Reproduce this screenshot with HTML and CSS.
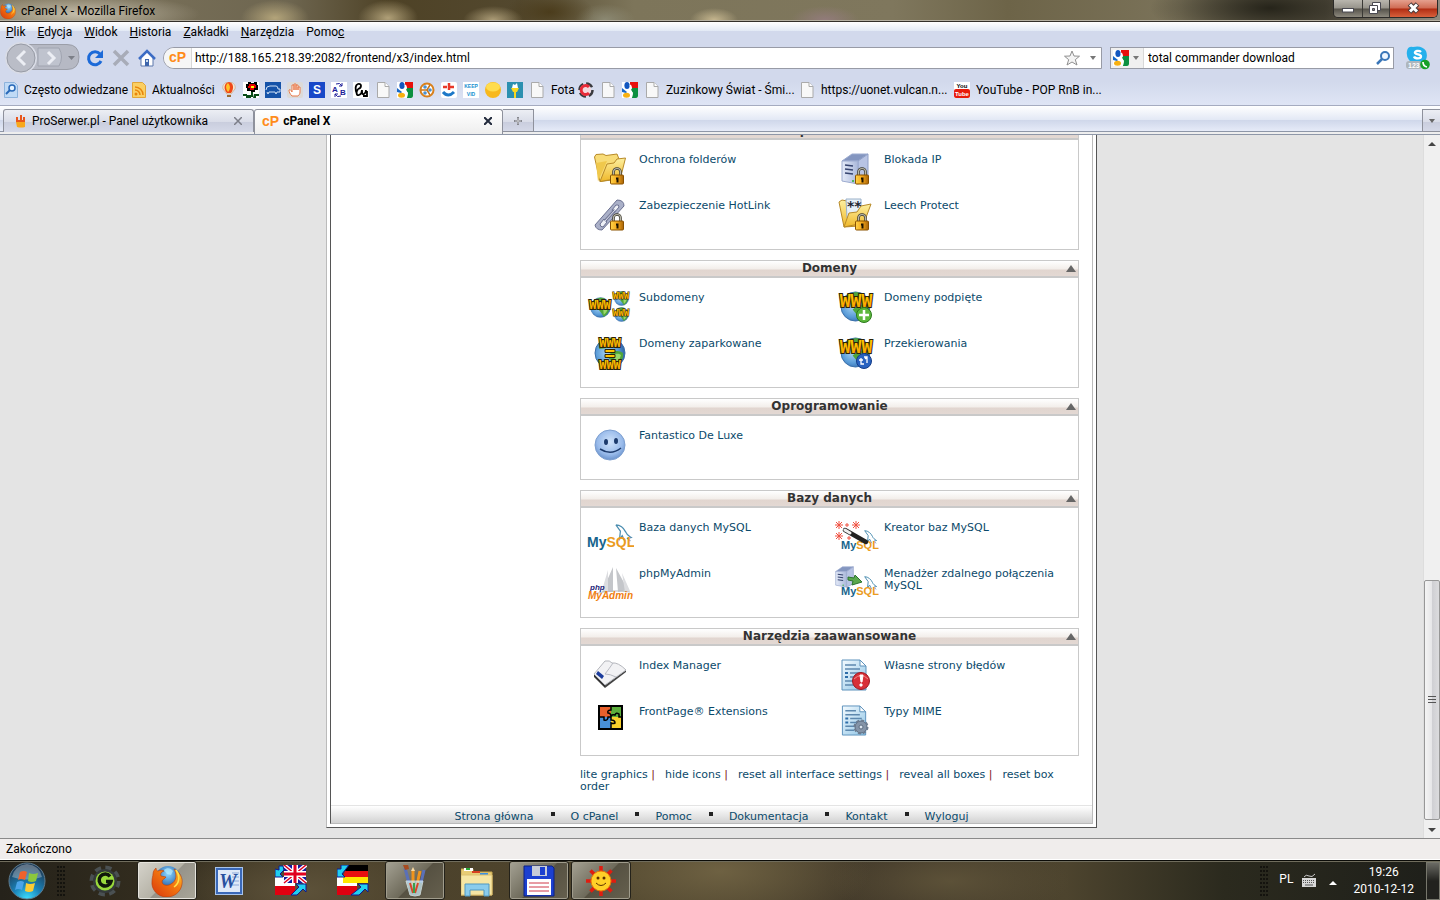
FILE: index.html
```html
<!DOCTYPE html>
<html lang="pl">
  <head>
    <meta charset="UTF-8" />
    <meta name="viewport" content="width=device-width, initial-scale=1.0" />
    <title>cPanel X - Mozilla Firefox</title>
    <link rel="stylesheet" href="styles.css">
  </head>
  <body>
    <!-- shared icon parts -->
    <svg class="sprite" aria-hidden="true">
      <defs>
        <linearGradient id="gold" x1="0" y1="0" x2="0" y2="1">
          <stop offset="0" stop-color="#fdf0a0" /><stop offset="1" stop-color="#f0b82a" />
        </linearGradient>
        <linearGradient id="lockgold" x1="0" y1="0" x2="1" y2="0">
          <stop offset="0" stop-color="#ffd34a" /><stop offset="0.5" stop-color="#f5a91c" /><stop offset="1" stop-color="#a86408" />
        </linearGradient>
        <linearGradient id="steel" x1="0" y1="0" x2="1" y2="0">
          <stop offset="0" stop-color="#e4eaf8" /><stop offset="1" stop-color="#aab8da" />
        </linearGradient>
        <linearGradient id="paper" x1="0" y1="0" x2="1" y2="1">
          <stop offset="0" stop-color="#f4fbff" /><stop offset="1" stop-color="#8ec4e6" />
        </linearGradient>
        <linearGradient id="letters" x1="0" y1="0" x2="0" y2="1">
          <stop offset="0" stop-color="#ffd400" /><stop offset="1" stop-color="#f79a00" />
        </linearGradient>
        <radialGradient id="water" cx="0.4" cy="0.5" r="0.6">
          <stop offset="0" stop-color="#a8d4f4" /><stop offset="0.6" stop-color="#5a9cd8" /><stop offset="1" stop-color="#2c64a8" />
        </radialGradient>
        <radialGradient id="smile" cx="0.5" cy="0.4" r="0.6">
          <stop offset="0" stop-color="#cfe2fa" /><stop offset="0.7" stop-color="#98baea" /><stop offset="1" stop-color="#6a92cc" />
        </radialGradient>
        <radialGradient id="orb" cx="0.5" cy="1" r="0.9">
          <stop offset="0" stop-color="#3ee0ff" /><stop offset="0.45" stop-color="#1a82b8" /><stop offset="1" stop-color="#1d3a56" />
        </radialGradient>
        <radialGradient id="foxblue" cx="0.5" cy="0.3" r="0.6">
          <stop offset="0" stop-color="#8fd8ff" /><stop offset="1" stop-color="#1450a0" />
        </radialGradient>
        <linearGradient id="foxfur" x1="0" y1="1" x2="1" y2="0">
          <stop offset="0" stop-color="#d8360c" /><stop offset="0.6" stop-color="#f47a10" /><stop offset="1" stop-color="#ffd83a" />
        </linearGradient>
      </defs>
      <symbol id="lock" viewBox="0 0 14 18">
        <path d="M3.500 9V5a3.500 3.500 0 0 1 7 0v4" fill="none" stroke="#3c3a30" stroke-width="2.600" />
        <path d="M3.500 9V5a3.500 3.500 0 0 1 7 0v4" fill="none" stroke="#b9b7a8" stroke-width="1.200" />
        <rect x="0.500" y="8" width="13" height="9" rx="1" fill="url(#lockgold)" stroke="#8a5200" />
        <path d="M6 10.500h2.500v5h-2v-3H6z" fill="#1c1200" />
      </symbol>
      <symbol id="server" viewBox="0 0 28 32">
        <path d="M1 8 11 1h16L17 8z" fill="#8496c0" stroke="#9cabcf" />
        <path d="M17 8 27 1v25l-10 5z" fill="#b8c4e4" stroke="#8e9ec6" />
        <path d="M1 8h16v23L1 28z" fill="url(#steel)" stroke="#9cabcf" />
        <path d="M4 12l8 1M4 16l8 1M4 20l8 1" stroke="#35436e" stroke-width="1.500" />
        <circle cx="12" cy="28" r="1" fill="#28b030" />
      </symbol>
      <symbol id="folder" viewBox="0 0 32 30">
        <path d="M0.500 4 2 1.500l7-.5 3 1.500L23 1l2 5v20L6 28.500z" fill="#f8dc78" stroke="#b88a28" />
        <path d="M4 28.500 2 10l11-2z" fill="#f0c84c" />
        <path d="M6 28.500 13 11l7-1 3-4 8.500-1-5 20z" fill="url(#gold)" stroke="#b88a28" />
      </symbol>
      <symbol id="globe" viewBox="0 0 32 32">
        <circle cx="16" cy="16" r="15" fill="url(#water)" stroke="#3a6ea8" />
        <path d="M6 6c5-5 12-6 17-3l-3 5-7 3-8 1zM17 16c5-3 9-2 12 0 1 6-3 11-8 14l-4-6-4-5z" fill="#4fa53a" />
        <path d="M20 18c3-2 5-1 7 0-1 4-3 7-6 9z" fill="#9ad86a" />
      </symbol>
      <symbol id="dolphin" viewBox="0 0 20 20">
        <path d="M1 1c5 0 9 4 11 8 1 3 3 4 6 6l-4 1 3 3M1 1l5 7-1 9 3-4 3 6" fill="none" stroke="#4b8db0" stroke-width="1.400" />
      </symbol>
      <symbol id="sheet" viewBox="0 0 28 32">
        <path d="M1 1h18l6 6v24H1z" fill="url(#paper)" stroke="#5c92bc" />
        <path d="M19 1v6h6z" fill="#fff" stroke="#5c92bc" />
        <path d="M4 6h11M4 10h15M9 14h12M9 18h12M4 22h11M4 26h9" stroke="#5d88ae" stroke-width="1.500" />
        <path d="M4 14h3M4 18h3" stroke="#2d6da8" stroke-width="2" />
      </symbol>
      <symbol id="doc" viewBox="0 0 16 16">
        <path d="M2.500.500h7.500l4 4v11H2.500z" fill="#f8f8f8" stroke="#aaa" />
        <path d="M10 .500v4h4" fill="#fff" stroke="#aaa" />
      </symbol>
      <symbol id="google" viewBox="0 0 16 16">
        <path d="M0 0h16v16H0z" fill="#fff" />
        <path d="M8 0h8v6h-6L8 3z" fill="#e8100c" />
        <path d="M10 6h6v8a2 2 0 0 1-2 2H9l2-5-2-3z" fill="#0c9040" />
        <path d="M0 6l5 4-1 1-4-1z" fill="#1668c8" />
        <ellipse cx="5" cy="3.500" rx="2.600" ry="3.500" fill="#1257c0" />
        <ellipse cx="4.500" cy="13.300" rx="3.500" ry="2.500" fill="#f8b010" />
        <path d="M8 3c2 2 1 4-1 5 3 1 4 4 2 8" fill="none" stroke="#fff" stroke-width="1.500" />
      </symbol>
      <symbol id="firefox" viewBox="0 0 32 32">
        <circle cx="17" cy="14" r="13" fill="url(#foxblue)" />
        <path d="M2 9c0-3 2-5 3-6 0 2 1 3 2 3 2-1 5-1 6 0-3 1-4 3-3 5l5 1c-1 2-4 2-4 5 1 4 6 4 9 2 6-3 6-10 3-15 6 3 9 9 8 15-1 8-8 13-15 13C6 32 0 24 1 16c0-3 1-5 1-7z" fill="url(#foxfur)" stroke="#b83a08" stroke-width="0.600" />
        <path d="M25 5c4 5 4 13-2 17" fill="none" stroke="#ffe04a" stroke-width="1.500" />
        <path d="M13 5c3-3 7-2 9 1l-2 4-4-1z" fill="#b6ecff" opacity=".7" />
      </symbol>
    </svg>

    <div class="window">
      <header class="titlebar">
        <svg class="i16"><use href="#firefox" /></svg>
        <h1>cPanel X - Mozilla Firefox</h1>
        <div class="window-buttons">
          <button class="win-min" aria-label="Minimalizuj"><svg viewBox="0 0 28 18"><rect x="8.500" y="8.500" width="11" height="3.500" fill="#fff" stroke="#4a4a52" /></svg></button>
          <button class="win-max" aria-label="Przywróć"><svg viewBox="0 0 26 18"><path d="M9.500 2.500h8v8h-8z" fill="#fff" stroke="#4a4a52" /><path d="M6.500 5.500h8v8h-8z" fill="#fff" stroke="#4a4a52" /><path d="M9.500 8.500h2v2h-2z" fill="#888" stroke="#4a4a52" /></svg></button>
          <button class="win-close" aria-label="Zamknij"><svg viewBox="0 0 46 18"><path d="M19 4l8 8M27 4l-8 8" stroke="#4a3a3a" stroke-width="5" /><path d="M19.500 4.500l7 7M26.500 4.500l-7 7" stroke="#fff" stroke-width="3" /></svg></button>
        </div>
      </header>

      <div class="toolbox">
        <nav class="menubar">
          <a href="#"><u>P</u>lik</a>
          <a href="#"><u>E</u>dycja</a>
          <a href="#"><u>W</u>idok</a>
          <a href="#"><u>H</u>istoria</a>
          <a href="#"><u>Z</u>akładki</a>
          <a href="#"><u>N</u>arzędzia</a>
          <a href="#">Pomo<u>c</u></a>
        </nav>

        <div class="navbar">
          <button class="history" aria-label="Wstecz i dalej">
            <svg viewBox="0 0 78 32">
              <path d="M19 2.500h46q12 0 12 12.500t-12 12.500H19z" fill="#b6b9c4" stroke="#9b9ea8" />
              <path d="M36 6h21q5 9 0 18H36z" fill="#bfc3ce" stroke="#a0a4b0" />
              <circle cx="19" cy="16" r="15" fill="#b4b7c1" stroke="#d9dce6" stroke-width="2" />
              <circle cx="19" cy="16" r="14" fill="#babdc7" stroke="#989ca6" />
              <path d="M23 9l-7 7 7 7" fill="none" stroke="#eceef4" stroke-width="3" />
              <path d="M46 10l6 6-6 6" fill="none" stroke="#eceef4" stroke-width="3" />
              <path d="M66 14h7l-3.500 4z" fill="#7c7f88" />
            </svg>
          </button>
          <button class="tool" aria-label="Odśwież"><svg viewBox="0 0 18 18"><path d="M15 12a6.500 6.500 0 1 1-1-7" fill="none" stroke="#1c6ad8" stroke-width="3" /><path d="M17 1v8H9z" fill="#1c6ad8" /></svg></button>
          <button class="tool" aria-label="Zatrzymaj"><svg viewBox="0 0 18 18"><path d="M2 2l14 14M16 2 2 16" stroke="#a8acb8" stroke-width="3.500" /></svg></button>
          <button class="tool" aria-label="Strona startowa"><svg viewBox="0 0 18 18"><path d="M3 9v8h12V9L9 3z" fill="#fff" stroke="#5d78ac" /><path d="M1 10l8-8 8 8" fill="none" stroke="#3c6cc4" stroke-width="2.500" /><path d="M7 10h4v7H7z" fill="#3e66ac" /><path d="M8 11h2v2H8z" fill="#cde" /></svg></button>
          <div class="urlbar">
            <span class="identity cp">cP</span>
            <input type="text" aria-label="Adres" value="http://188.165.218.39:2082/frontend/x3/index.html">
            <svg class="star" viewBox="0 0 16 16"><path d="M8 1l2 5 5.500.200-4.200 3.500L13 15l-5-3-5 3 1.700-5.300L.500 6.200 6 6z" fill="#f4f4f4" stroke="#909090" /></svg>
            <svg class="caret" viewBox="0 0 6 4"><path d="M0 0h6L3 4z" fill="#777" /></svg>
          </div>
          <div class="searchbar">
            <span class="engine"><svg class="i16"><use href="#google" /></svg><svg class="caret" viewBox="0 0 6 4"><path d="M0 0h6L3 4z" fill="#777" /></svg></span>
            <input type="text" aria-label="Szukaj" value="total commander download">
            <svg class="i16" viewBox="0 0 16 16"><circle cx="10" cy="6" r="4" fill="#eef6ff" stroke="#3a76b8" stroke-width="2" /><path d="M7 9l-5 5" stroke="#3a76b8" stroke-width="2.500" /></svg>
          </div>
          <button class="skype" aria-label="Skype">
            <svg viewBox="0 0 24 24"><path d="M1 5q1-5 6-4 9-2 13 4 3 8-4 12-8 3-13-3-3-4-2-9z" fill="#24b0ec" /><path d="M15 6c-2-2-7-1-6 1 1 2 6 1 6 3.500S9 13 8 10.500" fill="none" stroke="#fff" stroke-width="2.300" /><rect x="0" y="15" width="16" height="8" rx="3" fill="#aeb6bc" /><text x="2" y="22" class="skype-text">123</text><circle cx="19" cy="18.500" r="4.800" fill="#18a028" /><path d="M17 16c0 3 1.500 4.500 4 5" fill="none" stroke="#fff" stroke-width="1.700" /></svg>
          </button>
        </div>

        <nav class="bookmarks">
          <a href="#" class="w-freq"><svg class="i16" viewBox="0 0 16 16"><path d="M.500 .500h10l3 3v12H.500z" fill="#c0daf6" stroke="#8db3dc" /><circle cx="8" cy="6" r="3" fill="#e8f4ff" stroke="#2868b8" stroke-width="1.500" /><path d="M6 8l-4 4" stroke="#2868b8" stroke-width="2" /></svg>Często odwiedzane</a>
          <a href="#" class="w-news"><svg class="i16" viewBox="0 0 16 16"><path d="M.500 .500h10l3 3v12H.500z" fill="#fbcf62" stroke="#e0a538" /><circle cx="4" cy="12" r="1.500" fill="#e8850c" /><path d="M3 8a5 5 0 0 1 5 5M3 5a8 8 0 0 1 8 8" fill="none" stroke="#e8850c" stroke-width="1.500" /></svg>Aktualności</a>
          <a href="#" aria-label="Balon"><svg class="i16" viewBox="0 0 16 16"><path d="M8 0c5 0 7 4 6 7l-4 5H6L2 7C1 4 3 0 8 0z" fill="#f4e6d0" stroke="#d0b8a0" /><path d="M8 0c5 1 5 7 2 11H6C2 7 3 1 8 0z" fill="#f04818" /><path d="M7 1c3 3 2 7 0 9-2-2-3-7 0-9z" fill="#ffc428" /><path d="M6 13h4v2H6z" fill="#9a6a30" /></svg></a>
          <a href="#" aria-label="Kwiat"><svg class="i16" viewBox="0 0 16 16"><path d="M0 0h16v16H0z" fill="#fff" /><path d="M5 0h3v1h3V0h3v3h1v5h-3v2H8V9H4V6H3V2h2z" fill="#000" /><path d="M6 2h6v1h1v3h-2v2H7V6H5V4h1z" fill="#e80000" /><path d="M8 4h3v2H8z" fill="#ff0" /><path d="M8 10h2v5H8zM0 12h4v1h4v3H3v-2H0zM11 12h5v2h-3v2h-3z" fill="#084c18" /></svg></a>
          <a href="#" aria-label="Samochód"><svg class="i16" viewBox="0 0 16 16"><path d="M0 0h16v16H0z" fill="#1552a8" /><path d="M1 8q0-4 4-4h6q2 0 2 3h2v3h-3l-1 2-1-2H4l-1 2-1-2" fill="none" stroke="#cfe0f6" /></svg></a>
          <a href="#" aria-label="Dłoń"><svg class="i16" viewBox="0 0 16 16"><rect width="16" height="16" rx="2" fill="#dcdad8" /><path d="M5 14c-2-2-3-4-3-6 1-1 2 0 3 2V3h2v5-6h2v6-5h2v5-3h2v5c0 2-1 3-2 4z" fill="#fff" stroke="#e87848" /></svg></a>
          <a href="#" aria-label="S"><svg class="i16" viewBox="0 0 16 16"><path d="M0 0h16v16H0z" fill="#1848c8" /><text x="8" y="12" text-anchor="middle" class="s-text">S</text></svg></a>
          <a href="#" aria-label="Tłumacz"><svg class="i16" viewBox="0 0 16 16"><path d="M0 0h16v16H0z" fill="#fff" /><text x="1" y="10" class="ab-text">A</text><text x="9" y="13" class="ab-text">B</text><path d="M5 2q4-2 6 2M10 14q-4 2-6-2M11 1v3H8M4 15v-3h3" fill="none" stroke="#1c1c98" /></svg></a>
          <a href="#" aria-label="Podpis"><svg class="i16" viewBox="0 0 16 16"><path d="M0 0h16v16H0z" fill="#fff" /><path d="M4 12C2 8 2 3 5 2c4-1 4 4 0 5M5 7c-2 3-2 7 1 6s3-4 3-5c0 3 0 5 2 4s2-3 2-4M10 14h4V9" fill="none" stroke="#000" stroke-width="1.800" /></svg></a>
          <a href="#" aria-label="Strona"><svg class="i16"><use href="#doc" /></svg></a>
          <a href="#" aria-label="Google"><svg class="i16"><use href="#google" /></svg></a>
          <a href="#" aria-label="Koło"><svg class="i16" viewBox="0 0 16 16"><circle cx="8" cy="8" r="6.500" fill="#fff" stroke="#d8801c" stroke-width="2" /><path d="M2 8h6l3-5M8 8l3 5" stroke="#c87418" stroke-width="1.500" fill="none" /><circle cx="6" cy="5" r="1.800" fill="#4a90d0" /><circle cx="11" cy="8" r="1.800" fill="#4a90d0" /><circle cx="6" cy="11" r="1.800" fill="#4a90d0" /></svg></a>
          <a href="#" aria-label="Uśmiech"><svg class="i16" viewBox="0 0 16 16"><rect width="16" height="16" rx="2" fill="#fff" /><path d="M8 1v7M2 5h4M8 5h5" stroke="#e83828" stroke-width="2.500" /><path d="M2 10q5 6 11 0" fill="none" stroke="#1c78c8" stroke-width="3" /></svg></a>
          <a href="#" aria-label="KeepVid"><svg class="i16" viewBox="0 0 16 16"><path d="M0 0h16v16H0z" fill="#fff" /><text x="8" y="6" text-anchor="middle" class="kv-text">KEEP</text><text x="8" y="14" text-anchor="middle" class="kv-text">VID</text></svg></a>
          <a href="#" aria-label="Moneta"><svg class="i16" viewBox="0 0 16 16"><circle cx="8" cy="8" r="8" fill="#f8b81c" /><ellipse cx="8" cy="5" rx="7" ry="4.500" fill="#ffdc4c" /></svg></a>
          <a href="#" aria-label="Drzewo"><svg class="i16" viewBox="0 0 16 16"><path d="M0 0h16v16H0z" fill="#2c90b0" /><path d="M4 6h8l-2 4H9v6H7v-6H6z" fill="#f8d820" /><path d="M5 6l1-4 2 1 2-2 1 5z" fill="#fff" /></svg></a>
          <a href="#" class="w-fota"><svg class="i16"><use href="#doc" /></svg>Fota</a>
          <a href="#" aria-label="C"><svg class="i16" viewBox="0 0 16 16"><circle cx="8" cy="8" r="6.500" fill="none" stroke="#3a3a3e" stroke-width="2.500" stroke-dasharray="7 3" /><circle cx="7.500" cy="8" r="5.500" fill="#f4d8dc" /><path d="M11 5a4.500 4.500 0 1 0 0 6" fill="none" stroke="#e82a38" stroke-width="3" /></svg></a>
          <a href="#" aria-label="Strona"><svg class="i16"><use href="#doc" /></svg></a>
          <a href="#" aria-label="Google"><svg class="i16"><use href="#google" /></svg></a>
          <a href="#" class="w-zuz"><svg class="i16"><use href="#doc" /></svg>Zuzinkowy Świat - Śmi...</a>
          <a href="#" class="w-uonet"><svg class="i16"><use href="#doc" /></svg>https://uonet.vulcan.n...</a>
          <a href="#" class="w-yt"><svg class="i16" viewBox="0 0 16 16"><path d="M0 0h16v16H0z" fill="#fff" /><rect y="7" width="16" height="9" rx="2" fill="#e81c0c" /><text x="8" y="6" text-anchor="middle" class="yt-text">You</text><text x="8" y="14" text-anchor="middle" class="yt-text yt-red">Tube</text></svg>YouTube - POP RnB in...</a>
        </nav>
      </div>

      <div class="tabbar">
        <div class="tab">
          <svg class="i16" viewBox="0 0 16 16"><path d="M4 9V4h2v3h2V2h2v5h1V4h2v5z" fill="#e8561c" /><path d="M4 9h9v5q-4 1-8 0z" fill="#f8a81c" /></svg>
          <a href="#">ProSerwer.pl - Panel użytkownika</a>
          <button aria-label="Zamknij kartę"><svg viewBox="0 0 8 8"><path d="M0 0l8 8M8 0 0 8" stroke="#7c7e88" stroke-width="1.500" /></svg></button>
        </div>
        <div class="tab active">
          <span class="cp">cP</span>
          <a href="#">cPanel X</a>
          <button aria-label="Zamknij kartę"><svg viewBox="0 0 8 8"><path d="M0 0l8 8M8 0 0 8" stroke="#222a3c" stroke-width="2" /></svg></button>
        </div>
        <button class="newtab" aria-label="Nowa karta"><svg viewBox="0 0 8 8"><path d="M4 0v8M0 4h8" stroke="#85878f" stroke-width="2" /><path d="M4 1v6M1 4h6" stroke="#eee" stroke-width="0.600" /></svg></button>
        <button class="alltabs" aria-label="Lista kart"><svg class="caret" viewBox="0 0 6 4"><path d="M0 0h6L3 4z" fill="#666" /></svg></button>
      </div>

      <div class="browser">
        <main class="viewport">
          <div class="page">
            <div class="inner">
              <div class="content">
                <section class="box">
                  <h2>Bezpieczeństwo<i class="toggle"></i></h2>
                  <div class="items">
                    <div class="item">
                      <svg viewBox="0 0 48 46"><use href="#folder" x="8" y="6" width="32" height="30" /><use href="#lock" x="24" y="20" width="14" height="18" /></svg>
                      <a href="#">Ochrona folderów</a>
                    </div>
                    <div class="item">
                      <svg viewBox="0 0 48 46"><use href="#server" x="10" y="6" width="28" height="32" /><use href="#lock" x="24" y="20" width="14" height="18" /></svg>
                      <a href="#">Blokada IP</a>
                    </div>
                    <div class="item">
                      <svg viewBox="0 0 48 46">
                        <path d="M9 32 31 7q7 0 7 6L16 37q-6 0-7-5z" fill="#aab0c8" stroke="#6a7090" />
                        <path d="M26 17l4-5q3-1 3 2l-5 6zM14 31l4-5 3 3-4 5q-3 0-3-3z" fill="#eef0f6" stroke="#6a7090" />
                        <path d="M19 28l10-11" stroke="#747a98" stroke-width="3" /><path d="M19 28l10-11" stroke="#dfe2ee" />
                        <use href="#lock" x="24" y="20" width="14" height="18" />
                      </svg>
                      <a href="#">Zabezpieczenie HotLink</a>
                    </div>
                    <div class="item">
                      <svg viewBox="0 0 48 46">
                        <path d="M8 9l3-2 5 1 12 1v24l-15 1z" fill="url(#gold)" stroke="#b88a28" />
                        <path d="M15 6h15v16l-14 3z" fill="#e6f0f8" stroke="#9ab0c8" />
                        <text x="16" y="18" class="star-text">**</text>
                        <path d="M13 34 18 20l8-1 4-6 10-2-7 19z" fill="url(#gold)" stroke="#b88a28" />
                        <use href="#lock" x="24" y="20" width="14" height="18" />
                      </svg>
                      <a href="#">Leech Protect</a>
                    </div>
                  </div>
                </section>

                <section class="box">
                  <h2>Domeny<i class="toggle"></i></h2>
                  <div class="items">
                    <div class="item">
                      <svg viewBox="0 0 48 46">
                        <use href="#globe" x="4" y="12" width="21" height="21" /><text x="14" y="24" class="www www-m">WWW</text>
                        <use href="#globe" x="28" y="6" width="15" height="15" /><text x="35" y="14" class="www www-s">WWW</text>
                        <use href="#globe" x="28" y="22" width="15" height="15" /><text x="35" y="31" class="www www-s">WWW</text>
                      </svg>
                      <a href="#">Subdomeny</a>
                    </div>
                    <div class="item">
                      <svg viewBox="0 0 48 46">
                        <use href="#globe" x="9" y="6" width="31" height="31" /><text x="25" y="22" class="www www-l">WWW</text>
                        <circle cx="33" cy="30" r="7.500" fill="#5cb83c" stroke="#2c7a1c" /><path d="M33 25v10M28 30h10" stroke="#fff" stroke-width="2.500" />
                      </svg>
                      <a href="#">Domeny podpięte</a>
                    </div>
                    <div class="item">
                      <svg viewBox="0 0 48 46">
                        <use href="#globe" x="8" y="6" width="32" height="32" />
                        <text x="24" y="16" class="www www-m">WWW</text><text x="24" y="38" class="www www-m">WWW</text>
                        <path d="M19 18.500h10v3H19zM19 23.500h10v3H19z" fill="#ffc400" stroke="#2c2408" />
                      </svg>
                      <a href="#">Domeny zaparkowane</a>
                    </div>
                    <div class="item">
                      <svg viewBox="0 0 48 46">
                        <use href="#globe" x="9" y="6" width="31" height="31" /><text x="25" y="22" class="www www-l">WWW</text>
                        <circle cx="33" cy="30" r="7.500" fill="#2862c0" stroke="#143c88" /><path d="M30 27v6h3M28 29h4M33 26h3v6M34 28l2-2" fill="none" stroke="#fff" stroke-width="1.300" />
                      </svg>
                      <a href="#">Przekierowania</a>
                    </div>
                  </div>
                </section>

                <section class="box">
                  <h2>Oprogramowanie<i class="toggle"></i></h2>
                  <div class="items">
                    <div class="item">
                      <svg viewBox="0 0 48 46">
                        <circle cx="24" cy="22" r="15" fill="url(#smile)" stroke="#7d9fd0" />
                        <ellipse cx="20" cy="19" rx="2" ry="3" fill="#1c3a6c" /><ellipse cx="30" cy="18" rx="2" ry="3" fill="#1c3a6c" />
                        <path d="M14 26q11 7 21-1" fill="none" stroke="#1c3a6c" stroke-width="1.500" />
                      </svg>
                      <a href="#">Fantastico De Luxe</a>
                    </div>
                  </div>
                </section>

                <section class="box">
                  <h2>Bazy danych<i class="toggle"></i></h2>
                  <div class="items">
                    <div class="item">
                      <svg viewBox="0 0 48 46"><use href="#dolphin" x="29" y="9" width="18" height="18" /><text x="1" y="32" class="mysql"><tspan class="my">My</tspan>SQL</text></svg>
                      <a href="#">Baza danych MySQL</a>
                    </div>
                    <div class="item">
                      <svg viewBox="0 0 48 46">
                        <use href="#dolphin" x="33" y="15" width="14" height="14" />
                        <text x="10" y="34" class="mysql mysql-s"><tspan class="my">My</tspan>SQL</text>
                        <path d="M8 6v8M4 10h8M5 7l6 6M11 7l-6 6M8 17v8M4 21h8M5 18l6 6M11 18l-6 6M25 6v8M21 10h8M22 7l6 6M28 7l-6 6M16 8v4M14 10h4M18 21v4M16 23h4" stroke="#f05040" />
                        <path d="M14 15l21 12" stroke="#222" stroke-width="4.500" stroke-linecap="round" /><path d="M14 15l5 3" stroke="#eee" stroke-width="3" stroke-linecap="round" />
                      </svg>
                      <a href="#">Kreator baz MySQL</a>
                    </div>
                    <div class="item">
                      <svg viewBox="0 0 48 46">
                        <path d="M27 6v25H16zM30 7l12 22-10 2z" fill="#c4c6ca" /><path d="M22 9v22l-6-2zM36 12l8 18-5 1z" fill="#dcdde0" />
                        <path d="M8 33q18-5 36-2" fill="none" stroke="#b8babe" />
                        <text x="4" y="29" class="php-text">php</text><text x="2" y="38" class="pma-text">MyAdmin</text>
                      </svg>
                      <a href="#">phpMyAdmin</a>
                    </div>
                    <div class="item">
                      <svg viewBox="0 0 48 46">
                        <use href="#server" x="4" y="5" width="19" height="22" /><use href="#dolphin" x="33" y="15" width="14" height="14" />
                        <text x="10" y="34" class="mysql mysql-s"><tspan class="my">My</tspan>SQL</text>
                        <path d="M17 16l6 1 1-3 7 7-10 3 1-4-5-1z" fill="#5aa84c" stroke="#2c7430" />
                      </svg>
                      <a href="#">Menadżer zdalnego połączenia MySQL</a>
                    </div>
                  </div>
                </section>

                <section class="box">
                  <h2>Narzędzia zaawansowane<i class="toggle"></i></h2>
                  <div class="items">
                    <div class="item">
                      <svg viewBox="0 0 48 46">
                        <path d="M8 21l11 11v3L8 24z" fill="#333" /><path d="M19 32l21-15v2L19 35z" fill="#444" />
                        <path d="M8 21 19 8q5-1 7 2 6-1 14 7L19 32z" fill="#f2f2f4" stroke="#b4b6bc" />
                        <path d="M27 10q-4 6-8 11 5 0 11 3" fill="none" stroke="#b8bac2" />
                        <path d="M12 18l6 5-2 3-6-5z" fill="#1c3c9c" />
                      </svg>
                      <a href="#">Index Manager</a>
                    </div>
                    <div class="item">
                      <svg viewBox="0 0 48 46"><use href="#sheet" x="10" y="6" width="28" height="32" /><circle cx="30" cy="28" r="8.500" fill="#d83038" stroke="#a01820" /><path d="M23 26q7-7 14 0" fill="none" stroke="#f08888" /><path d="M29 22h3l-1 7h-1zM29 31h2v2h-2z" fill="#fff" stroke="#fff" /></svg>
                      <a href="#">Własne strony błędów</a>
                    </div>
                    <div class="item">
                      <svg viewBox="0 0 48 46">
                        <path d="M12 6h25v25H12z" fill="#000" />
                        <path d="M14 8h11v10H14z" fill="#e8602c" /><path d="M25 8h10v10H25z" fill="#5cae3c" /><path d="M14 18h11v11H14z" fill="#4890d8" /><path d="M25 18h10v11H25z" fill="#f8d02c" />
                        <path d="M25 8v3q-4 0-3 3 3 0 3 4h-3q0 4-4 3v-3h-4M25 18q0-3 4-2 1-3 4-1v3h2M25 18v3q4 0 4 3-2 1-4 0v5" fill="none" stroke="#000" stroke-width="1.500" />
                      </svg>
                      <a href="#">FrontPage® Extensions</a>
                    </div>
                    <div class="item">
                      <svg viewBox="0 0 48 46"><use href="#sheet" x="10" y="6" width="28" height="31" /><circle cx="30" cy="28" r="6" fill="#8494a8" stroke="#5c6c80" /><circle cx="30" cy="28" r="6.500" fill="none" stroke="#6c7c90" stroke-width="2" stroke-dasharray="3 2" /><circle cx="30" cy="28" r="2" fill="#dce6f0" stroke="#5c6c80" /></svg>
                      <a href="#">Typy MIME</a>
                    </div>
                  </div>
                </section>

                <p class="options">
                  <a href="#">lite graphics</a> | &nbsp;<a href="#">hide icons</a> | &nbsp;<a href="#">reset all interface settings</a> | &nbsp;<a href="#">reveal all boxes</a> | &nbsp;<a href="#">reset box order</a>
                </p>
              </div>

              <footer class="footer">
                <a href="#">Strona główna</a>
                <a href="#">O cPanel</a>
                <a href="#">Pomoc</a>
                <a href="#">Dokumentacja</a>
                <a href="#">Kontakt</a>
                <a href="#">Wyloguj</a>
              </footer>
            </div>
          </div>
        </main>

        <div class="scrollbar">
          <button aria-label="W górę"><svg viewBox="0 0 8 4"><path d="M0 4h8L4 0z" fill="#444" /></svg></button>
          <div class="track"><div class="thumb"><svg viewBox="0 0 8 8"><path d="M0 .500h8M0 3.500h8M0 6.500h8" stroke="#555" /></svg></div></div>
          <button aria-label="W dół"><svg viewBox="0 0 8 4"><path d="M0 0h8L4 4z" fill="#444" /></svg></button>
        </div>
      </div>

      <div class="statusbar">Zakończono</div>
    </div>

    <div class="taskbar">
      <button class="start" aria-label="Start">
        <svg viewBox="0 0 38 38">
          <circle cx="19" cy="19" r="18" fill="url(#orb)" stroke="#5e7c90" />
          <path d="M4 15q3-12 15-13 12 1 15 13-15 5-30 0z" fill="#fff" opacity=".3" />
          <path d="M12 10q4-2 7 0l-2 8q-4-2-7 0z" fill="#f0622c" /><path d="M21 11q4 2 9 0l-2 8q-4 2-8 0z" fill="#8cc83c" />
          <path d="M9 20q4-2 7 0l-2 8q-4-2-7 0z" fill="#4aa4e8" /><path d="M18 21q4 2 9 0l-2 8q-4 2-8 0z" fill="#fccc34" />
        </svg>
      </button>
      <span class="grip"></span>
      <div class="apps">
        <button aria-label="CodeGear">
          <svg viewBox="0 0 32 32"><circle cx="16" cy="16" r="13" fill="none" stroke="#4a5052" stroke-width="5" stroke-dasharray="6 4.200" /><circle cx="16" cy="16" r="12" fill="#34393a" /><circle cx="16" cy="16" r="9.500" fill="#9ada3c" /><path d="M21 11.500a6 6 0 1 0 1 5h-5" fill="none" stroke="#10180a" stroke-width="3.500" /></svg>
        </button>
        <button class="open front" aria-label="Firefox"><svg><use href="#firefox" /></svg></button>
        <button aria-label="Word">
          <svg viewBox="0 0 32 32"><rect x="2.500" y="2.500" width="27" height="27" fill="#3a68b8" stroke="#a8c4ec" /><path d="M5 5h22v22H5z" fill="#dfe9f8" /><path d="M19 8h7M19 12h7M19 16h7M19 20h7" stroke="#8ca8d8" /><text x="15" y="23" text-anchor="middle" class="word-text">W</text></svg>
        </button>
        <button aria-label="Słownik angielski">
          <svg viewBox="0 0 32 32"><path d="M0 12h20v9H0z" fill="#fff" /><path d="M0 21h20v9H0z" fill="#e00010" /><path d="M9 0h22v18H9z" fill="#1418a0" /><path d="M9 0l22 18M31 0 9 18" stroke="#fff" stroke-width="4" /><path d="M9 0l22 18M31 0 9 18" stroke="#e00020" stroke-width="1.500" /><path d="M20 0v18M9 9h22" stroke="#fff" stroke-width="6" /><path d="M20 0v18M9 9h22" stroke="#e00020" stroke-width="3" /><path d="M8 1H4v4L0 4v8h8L5 9l4-4zM31 19v8l-3-3-6 6h-6l8-8-3-3z" fill="#20d0f0" stroke="#101890" /></svg>
        </button>
        <button aria-label="Słownik niemiecki">
          <svg viewBox="0 0 32 32"><path d="M0 12h20v9H0z" fill="#fff" /><path d="M0 21h20v9H0z" fill="#e00010" /><path d="M10 0h21v7H8z" fill="#000" /><path d="M8 6h23v6H6z" fill="#e81010" /><path d="M6 12h25v6H6z" fill="#ffe800" /><path d="M12 0H4v4L0 4v8h8L5 9zM31 19v8l-3-3-6 6h-8l10-8-3-3z" fill="#20d0f0" stroke="#101890" /></svg>
        </button>
        <button class="open" aria-label="Paint">
          <svg viewBox="0 0 32 32"><path d="M10 18 6 3M22 18l3-13" stroke="#5a70b8" stroke-width="3" /><path d="M4 0l5-1 1 5-4 1z" fill="#a84c20" /><path d="M14 20V5M18 20l3-14" stroke="#f0941c" stroke-width="3" /><path d="M12 6l2-4 2 4z" fill="#f8d8a0" /><path d="M7 16h17l-3 14q-5 2-10 0z" fill="#c8e8f0" opacity=".75" stroke="#e8f8fc" /><path d="M11 18l3 10M19 18l-3 10" stroke="#d84828" stroke-width="2" /><path d="M15 18v10" stroke="#3ca048" stroke-width="2" /></svg>
        </button>
        <button aria-label="Eksplorator">
          <svg viewBox="0 0 32 32"><path d="M0 4h12v3h19v23H0z" fill="#e8cc74" stroke="#c8a850" /><path d="M3 3h9v3H3z" fill="#fff" /><path d="M5 3h4v2H5z" fill="#28a838" /><path d="M11 6h8v2h-8z" fill="#d84020" /><path d="M19 8h8v2h-8z" fill="#3c90e0" /><path d="M0 10h31v20H0z" fill="#f6e6a4" stroke="#dcc070" /><path d="M4 19h24v12h-5v-6H9v6H4z" fill="#8accec" stroke="#5098c0" /></svg>
        </button>
        <button class="open" aria-label="Total Commander">
          <svg viewBox="0 0 32 32"><path d="M1 1h28l2 2v28H1z" fill="#1c40d0" stroke="#0c2080" /><path d="M9 1h15v10H9z" fill="#c8ccd8" /><path d="M17 2h5v8h-5z" fill="#1c40d0" /><path d="M4 14h24v16H4z" fill="#fff" /><path d="M6 18h20M6 22h20M6 26h20" stroke="#d03848" /></svg>
        </button>
        <button class="open" aria-label="Słońce">
          <svg viewBox="0 0 32 32"><path d="M16 1v30M1 16h30M5.500 5.500l21 21M26.500 5.500l-21 21" stroke="#e01c10" stroke-width="3.500" /><circle cx="16" cy="16" r="10" fill="#ffd028" stroke="#e8780c" /><circle cx="13" cy="13" r="1.500" fill="#5c3000" /><circle cx="19" cy="13" r="1.500" fill="#5c3000" /><path d="M11 18q5 5 10 0" fill="none" stroke="#5c3000" /></svg>
        </button>
      </div>
      <div class="tray">
        <span class="grip"></span>
        <span class="lang">PL</span>
        <svg class="i16" viewBox="0 0 16 16"><path d="M3 4q2-3 5-1t6-2" fill="none" stroke="#ccc" /><path d="M1 5h14v9H1z" fill="#d8d8d8" /><path d="M2 7.500h12M2 9.500h12" stroke="#555" stroke-dasharray="1 1" /><path d="M4 12h8" stroke="#555" /></svg>
        <svg class="up" viewBox="0 0 8 4"><path d="M0 4h8L4 0z" fill="#fff" /></svg>
        <time class="clock" datetime="2010-12-12T19:26">19:26<br>2010-12-12</time>
        <button class="desktop" aria-label="Pokaż pulpit"></button>
      </div>
    </div>
  </body>
</html>
```
FILE: styles.css
```css
* {
  margin: 0;
  padding: 0;
  box-sizing: border-box;
}
body {
  height: 100vh;
  display: flex;
  flex-direction: column;
  overflow: hidden;
  font-family: Roboto, sans-serif;
  font-size: 12px;
  color: #000;
}
a {
  color: inherit;
  text-decoration: none;
}
button {
  border: none;
  background: none;
  display: flex;
  align-items: center;
  justify-content: center;
}
input {
  border: none;
  background: none;
  outline: none;
  font: inherit;
  flex: 1;
  min-width: 0;
}
svg {
  flex: none;
  display: block;
}
.sprite {
  position: absolute;
  width: 0;
  height: 0;
}
.i16 {
  width: 16px;
  height: 16px;
}
.cp {
  font: bold 14px "Liberation Sans", sans-serif;
  color: #ff8c1a;
}
.caret {
  width: 6px;
  height: 4px;
}
.window {
  flex: 1;
  min-height: 0;
  display: flex;
  flex-direction: column;
}

/* title bar */
.titlebar {
  height: 22px;
  display: flex;
  align-items: center;
  gap: 5px;
  border-bottom: 1px solid #33302a;
  box-shadow: inset 0 -1px #b5b0a2;
  background:
    radial-gradient(ellipse 120px 20px at 80px 14px, rgba(205, 198, 180, 0.9), transparent),
    radial-gradient(ellipse 34px 18px at 275px 18px, rgba(196, 179, 132, 0.8), transparent),
    radial-gradient(ellipse 30px 18px at 388px 18px, rgba(200, 183, 140, 0.8), transparent),
    radial-gradient(ellipse 30px 14px at 493px 20px, rgba(194, 177, 137, 0.8), transparent),
    radial-gradient(ellipse 44px 20px at 550px 12px, rgba(70, 54, 20, 0.8), transparent),
    radial-gradient(ellipse 30px 16px at 605px 20px, rgba(150, 150, 130, 0.7), transparent),
    radial-gradient(ellipse 24px 12px at 714px 20px, rgba(205, 189, 148, 0.9), transparent),
    radial-gradient(ellipse 34px 14px at 825px 20px, rgba(148, 124, 126, 0.9), transparent),
    radial-gradient(ellipse 120px 34px at 1270px 8px, #26241a, transparent),
    linear-gradient(90deg, #80775f, #6e6650 20%, #4e4226 27%, #53482e 36%, #7d755a 44%, #7f775d 62%, #6d6448 70%, #7b735a 82%, #5a5445 92%, #8f8b80);
}
.titlebar h1 {
  font-size: 12px;
  font-weight: normal;
}
.window-buttons {
  display: flex;
  align-self: flex-start;
  margin: 0 2px 0 auto;
  height: 18px;
  border: 1px solid #2b2a28;
  border-top: none;
  border-radius: 0 0 5px 5px;
  overflow: hidden;
}
.window-buttons svg {
  height: 18px;
}
.win-min,
.win-max {
  background: linear-gradient(#b9b6ae, #96938a 48%, #55524a 52%, #8d897e);
  border-right: 1px solid #3b3a36;
}
.win-min svg {
  width: 28px;
}
.win-max svg {
  width: 26px;
}
.win-close {
  background: linear-gradient(#e5a08e, #cf6a52 48%, #b02c12 52%, #d8603c);
}
.win-close svg {
  width: 47px;
}

/* toolbars */
.toolbox {
  background: linear-gradient(#fff, #e2e9f5 9px, #d2d9ec 9px, #d2d9ec 60px, #dfe5f5);
  border-bottom: 1px solid #a5abc0;
}
.menubar {
  height: 20px;
  padding-left: 6px;
  display: flex;
  align-items: center;
  gap: 12px;
}
.navbar {
  height: 32px;
  padding: 0 10px 0 2px;
  display: flex;
  align-items: center;
}
.history svg {
  width: 78px;
  height: 32px;
}
.tool {
  width: 26px;
}
.tool svg {
  width: 18px;
  height: 18px;
}
.history + .tool {
  margin-left: 2px;
}
.urlbar,
.searchbar {
  height: 22px;
  display: flex;
  align-items: center;
  background: #fff;
  border: 1px solid #989ba6;
}
.urlbar {
  flex: 1;
  margin-left: 3px;
  padding-right: 5px;
  border-radius: 11px 0 0 11px;
}
.identity {
  width: 28px;
  height: 20px;
  padding: 1px 0 0 5px;
  margin-right: 3px;
  border-right: 1px solid #d8d8d8;
  border-radius: 10px 0 0 10px;
  background: #f6f6f6;
}
.star {
  width: 16px;
  height: 16px;
  margin-right: 10px;
}
.searchbar {
  width: 284px;
  margin: 0 12px 0 8px;
  padding-right: 2px;
}
.engine {
  height: 20px;
  display: flex;
  align-items: center;
  gap: 4px;
  padding: 0 4px 0 2px;
  margin-right: 4px;
  border-right: 1px solid #d8d8d8;
  background: #f0f0f0;
}
.skype svg {
  width: 24px;
  height: 24px;
}
.bookmarks {
  height: 31px;
  padding-left: 4px;
  display: flex;
  align-items: center;
  gap: 6px;
}
.bookmarks a {
  display: flex;
  align-items: center;
  gap: 4px;
  white-space: nowrap;
}
.w-freq {
  width: 122px;
}
.w-news {
  width: 83px;
}
.bookmarks .w-fota,
.bookmarks .w-zuz,
.bookmarks .w-uonet,
.bookmarks .w-yt {
  gap: 6px;
}
.w-fota {
  width: 43px;
}
.w-zuz,
.w-uonet {
  width: 149px;
}

/* tabs */
.tabbar {
  height: 29px;
  padding: 3px 0 0 3px;
  display: flex;
  align-items: flex-start;
  background: linear-gradient(#fff, #e2e8f5 14px, #cfd7ea 14px, #e6ebf8 25px, #8e97a8 25px, #8e97a8 26px, #eee 26px, #eee 28px, #8e97a8 28px);
}
.tab {
  width: 251px;
  height: 23px;
  display: flex;
  align-items: center;
  gap: 4px;
  padding: 0 11px 0 8px;
  border: 1px solid #8e919c;
  border-bottom: none;
  border-radius: 3px 3px 0 0;
  background: linear-gradient(#eceef4, #d9dce8 12px, #c9cddd 12px, #d5d9e8);
}
.tab a {
  flex: 1;
}
.tab.active {
  width: 249px;
  height: 25px;
  padding: 0 10px 2px 7px;
  background: linear-gradient(#fff, #eee);
}
.tab.active a {
  font-weight: bold;
}
.tab button svg {
  width: 8px;
  height: 8px;
}
.newtab {
  width: 31px;
  height: 23px;
  border: 1px solid #8e919c;
  border-left: none;
  background: linear-gradient(#eceef4, #d9dce8 12px, #c9cddd 12px, #d5d9e8);
}
.newtab svg {
  width: 8px;
  height: 8px;
}
.alltabs {
  width: 18px;
  height: 23px;
  margin-left: auto;
  border: 1px solid #8e919c;
  border-right: none;
  background: linear-gradient(#eceef4, #d9dce8 12px, #c9cddd 12px, #d5d9e8);
}

/* page */
.browser {
  flex: 1;
  min-height: 0;
  display: flex;
  background: #e4e4e4;
}
.viewport {
  flex: 1;
  display: flex;
  flex-direction: column;
  justify-content: flex-end;
  overflow: hidden;
  padding-bottom: 10px;
  font-family: "DejaVu Sans", sans-serif;
}
.page {
  width: 100%;
  max-width: 771px;
  margin: 0 auto;
  padding: 3px;
  background: #fff;
  border: 1px solid;
  border-color: #bbb #555 #555 #bbb;
}
.inner {
  border: 1px solid;
  border-color: #555 #bbb #bbb #555;
}
.content {
  margin: 0 13px 0 249px;
}
.box {
  border: 1px solid #c9c9c9;
  margin-bottom: 10px;
}
.box h2 {
  height: 17px;
  display: flex;
  align-items: center;
  justify-content: center;
  position: relative;
  font-size: 12px;
  line-height: 15px;
  color: #333;
  border-bottom: 2px solid #c9c9c9;
  background: linear-gradient(#fff, #f3eeea 8px, #e1d5cf 9px, #e3d8d3);
}
.toggle {
  position: absolute;
  right: 2px;
  top: 4px;
  border: 5px solid transparent;
  border-top: none;
  border-bottom: 7px solid #666;
}
.items {
  display: grid;
  grid-template-columns: 1fr 1fr;
  padding: 7px 7px 10px 0;
}
.item {
  height: 46px;
  padding-left: 5px;
  display: flex;
  gap: 5px;
}
.item svg {
  width: 48px;
  height: 46px;
}
.item a {
  padding-top: 7px;
  font-size: 11px;
  line-height: 12px;
  color: #0b4a6b;
}
.options {
  padding: 3px 0 12px;
  font-size: 11px;
  line-height: 12px;
  color: #802020;
}
.options a {
  color: #0b4a6b;
}
.options a + a {
  margin-left: 3px;
}
.footer {
  height: 18px;
  padding-top: 4px;
  display: flex;
  align-items: center;
  justify-content: center;
  border-top: 1px solid #e4e4e4;
  background: linear-gradient(#fff, #d2d2d2);
  font-size: 11px;
  color: #0b4a6b;
}
.footer a + a::before {
  content: "";
  display: inline-block;
  width: 4px;
  height: 4px;
  margin: 0 16px 4px 17px;
  background: #222;
}
.scrollbar {
  width: 17px;
  display: flex;
  flex-direction: column;
  background: #f0f0f0;
  border-left: 1px solid #ddd;
}
.scrollbar button {
  height: 17px;
}
.scrollbar button svg {
  width: 8px;
  height: 4px;
}
.track {
  flex: 1;
  display: flex;
  flex-direction: column;
  justify-content: flex-end;
  padding-bottom: 1px;
}
.thumb {
  height: 36%;
  display: flex;
  align-items: center;
  justify-content: center;
  border: 1px solid #979797;
  border-radius: 2px;
  background: linear-gradient(90deg, #f4f4f4, #e6e6e8 50%, #cfcfd3 50%, #dcdcde);
}
.thumb svg {
  width: 8px;
  height: 8px;
}
.statusbar {
  height: 22px;
  padding-left: 6px;
  display: flex;
  align-items: center;
  background: #f0edec;
  border-top: 1px solid #8a8a8a;
  border-bottom: 1px solid #fff;
}

/* taskbar */
.taskbar {
  height: 40px;
  display: flex;
  align-items: center;
  border-top: 1px solid #0c0c08;
  box-shadow: inset 0 1px #6f6c5c;
  background:
    radial-gradient(ellipse 130px 50px at 300px 30px, #5d523a, transparent),
    radial-gradient(ellipse 150px 60px at 720px 10px, #6e6142, transparent),
    radial-gradient(ellipse 120px 40px at 950px 20px, #5c5138, transparent),
    linear-gradient(90deg, #25221a, #322c1e 10%, #4a402a 22%, #50462e 45%, #42392a 62%, #4d442e 74%, #2b2a1e 85%, #1e1f1a);
  color: #fff;
}
.start {
  width: 54px;
}
.start svg {
  width: 38px;
  height: 38px;
}
.grip {
  width: 9px;
  height: 30px;
  margin-left: 3px;
  background: radial-gradient(circle at 1px 1px, #14130e 1px, transparent 1px) 0 0 / 3px 4px;
}
.apps {
  display: flex;
  gap: 2px;
  margin-left: 9px;
}
.apps button {
  width: 60px;
  height: 39px;
  border: 1px solid transparent;
}
.apps svg {
  width: 32px;
  height: 32px;
}
.apps .open {
  border: 1px solid #24221a;
  border-radius: 3px;
  box-shadow: inset 0 0 0 1px #a09c8c;
  background: linear-gradient(135deg, #a5a294, #6e6a5a 50%, #565142 51%, #66604e);
}
.apps .front {
  box-shadow: inset 0 0 0 1px #e5e3dc;
  background: linear-gradient(135deg, #d6d4cc, #b5b2a6 50%, #96938a 51%, #a9a698);
}
.tray {
  margin-left: auto;
  display: flex;
  align-items: center;
}
.lang {
  margin: 0 8px 4px 10px;
}
.up {
  width: 8px;
  height: 4px;
  margin: 4px 16px 0 12px;
}
.clock {
  text-align: center;
  line-height: 17px;
}
.desktop {
  width: 14px;
  height: 38px;
  margin-left: 12px;
  border: 1px solid #77776c;
  background: linear-gradient(#6a6a64, #22221e 50%);
}

/* lettering inside the icons */
.www {
  font-family: "DejaVu Sans Mono", monospace;
  font-weight: bold;
  text-anchor: middle;
  fill: url(#letters);
  stroke: #2c2408;
  stroke-width: 2px;
  paint-order: stroke;
}
.www-l {
  font-size: 18px;
}
.www-m {
  font-size: 12px;
}
.www-s {
  font-size: 9px;
  stroke-width: 1px;
}
.mysql {
  font: bold 14px "Liberation Sans", sans-serif;
  fill: #eb9b1e;
}
.mysql-s {
  font-size: 11px;
}
.mysql .my {
  fill: #17648c;
}
.skype-text {
  font: bold 7px "Liberation Sans", sans-serif;
  fill: #fff;
}
.s-text {
  font: bold 12px "Liberation Sans", sans-serif;
  fill: #fff;
}
.ab-text {
  font: bold 8px "Liberation Sans", sans-serif;
  fill: #1c1c98;
}
.kv-text {
  font: bold 5px "Liberation Sans", sans-serif;
  fill: #2090d0;
}
.yt-text {
  font: bold 6px "Liberation Sans", sans-serif;
}
.yt-red {
  fill: #fff;
}
.star-text {
  font: bold 14px "DejaVu Sans", sans-serif;
  fill: #1c2430;
}
.php-text {
  font: italic bold 8px "Liberation Sans", sans-serif;
  fill: #1c1c78;
}
.pma-text {
  font: italic bold 10px "Liberation Sans", sans-serif;
  fill: #f08010;
}
.word-text {
  font: italic bold 20px "Liberation Serif", serif;
  fill: #2850a0;
}
```
